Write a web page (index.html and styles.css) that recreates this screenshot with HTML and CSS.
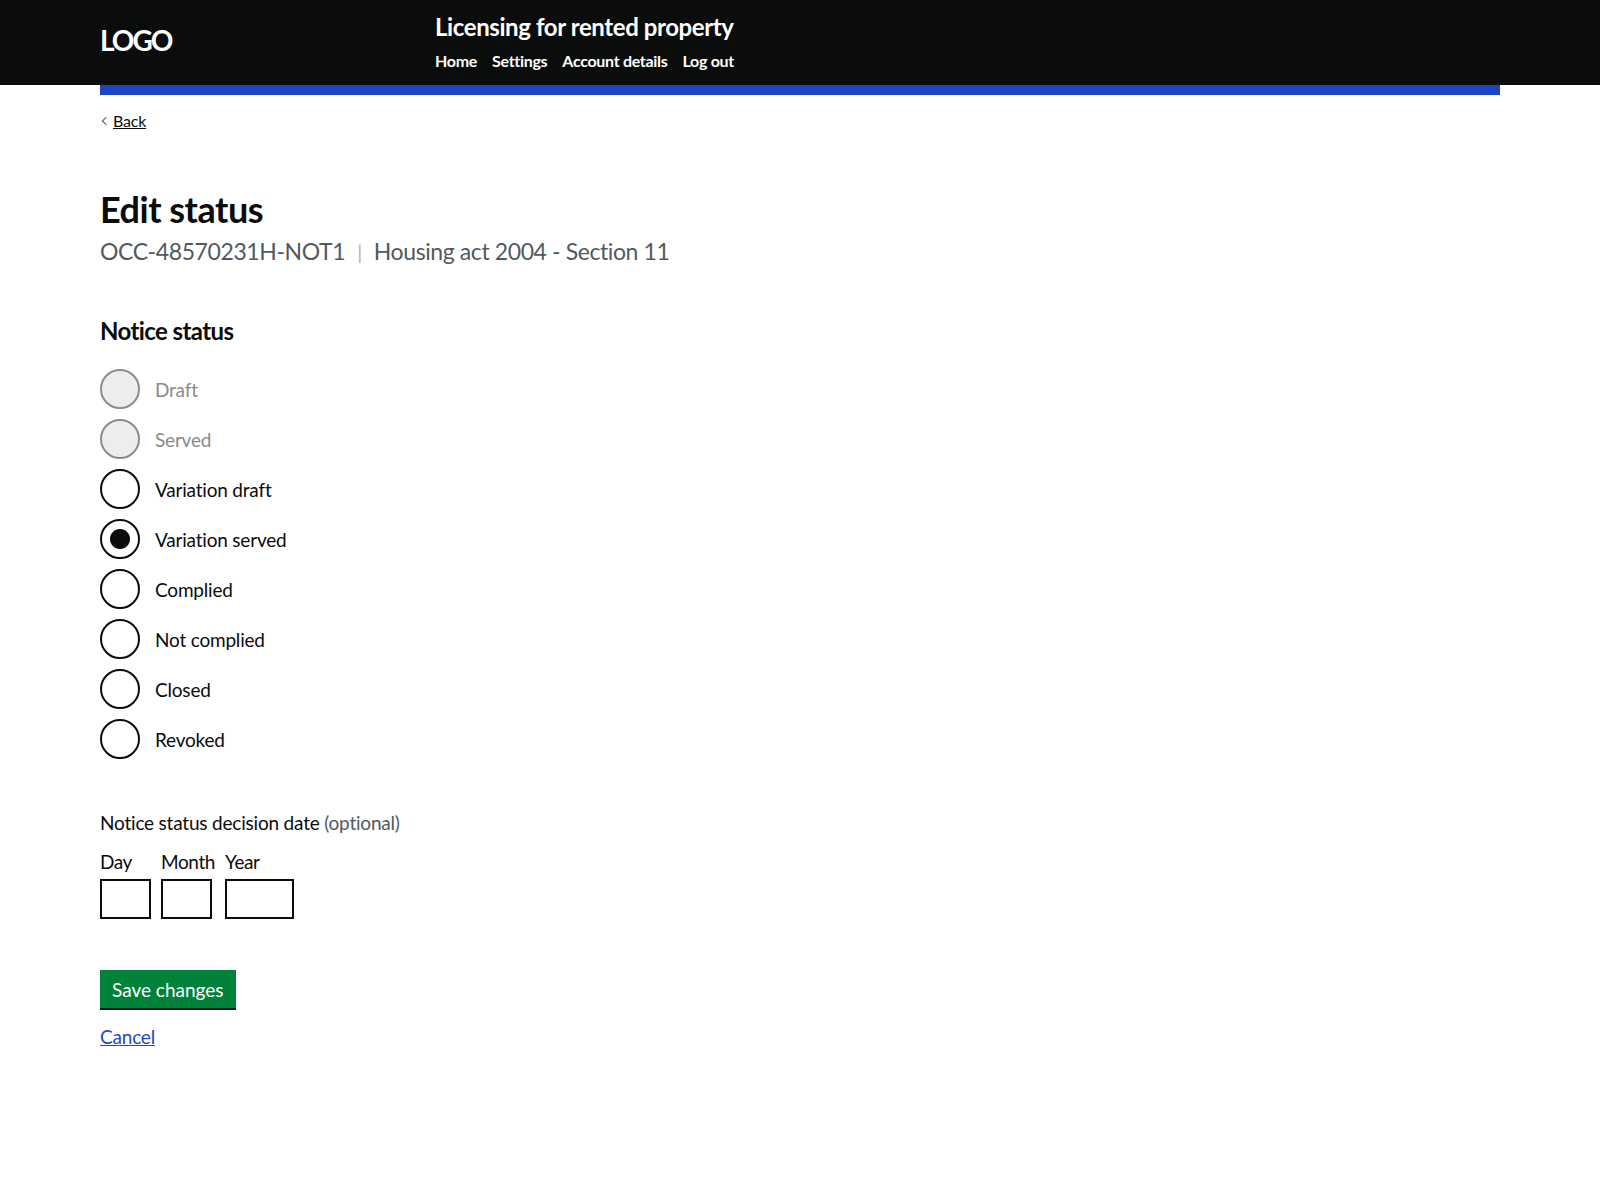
FILE: index.html
```html
<!DOCTYPE html>
<html lang="en">
<head>
    <meta charset="utf-8">
    <title>Edit status - Licensing for rented property</title>
    <link rel="stylesheet" href="styles.css">
</head>
<body>
    <header class="siteHeader">
        <div class="headerInner">
            <div class="logo">LOGO</div>
            <div class="service">
                <div class="serviceName">Licensing for rented property</div>
                <nav class="headerNav">
                    <a href="#">Home</a>
                    <a href="#">Settings</a>
                    <a href="#">Account details</a>
                    <a href="#">Log out</a>
                </nav>
            </div>
        </div>
    </header>
    <div class="pageWidth">
        <div class="headerStripe"></div>
        <a href="#" class="backLink">Back</a>

        <main class="mainContent">
            <h1 class="pageTitle">Edit status</h1>
            <p class="caption">OCC-48570231H-NOT1<span class="divider">|</span>Housing act 2004 - Section 11</p>

            <form>
                <fieldset class="fieldset statusGroup">
                    <legend class="legend">Notice status</legend>
                    <div class="radios">
                        <label class="radioItem isDisabled"><input type="radio" name="status" disabled> <span>Draft</span></label>
                        <label class="radioItem isDisabled"><input type="radio" name="status" disabled> <span>Served</span></label>
                        <label class="radioItem"><input type="radio" name="status"> <span>Variation draft</span></label>
                        <label class="radioItem"><input type="radio" name="status" checked> <span>Variation served</span></label>
                        <label class="radioItem"><input type="radio" name="status"> <span>Complied</span></label>
                        <label class="radioItem"><input type="radio" name="status"> <span>Not complied</span></label>
                        <label class="radioItem"><input type="radio" name="status"> <span>Closed</span></label>
                        <label class="radioItem"><input type="radio" name="status"> <span>Revoked</span></label>
                    </div>
                </fieldset>

                <fieldset class="fieldset dateGroup">
                    <legend class="dateLegend">Notice status decision date <span class="optional">(optional)</span></legend>
                    <div class="dateInputs">
                        <div class="dateItem">
                            <label for="day">Day</label>
                            <input id="day" class="dateBox dateBox2" type="text" inputmode="numeric">
                        </div>
                        <div class="dateItem">
                            <label for="month">Month</label>
                            <input id="month" class="dateBox dateBox2" type="text" inputmode="numeric">
                        </div>
                        <div class="dateItem">
                            <label for="year">Year</label>
                            <input id="year" class="dateBox dateBox4" type="text" inputmode="numeric">
                        </div>
                    </div>
                </fieldset>

                <button type="submit" class="saveButton">Save changes</button>
                <div><a href="#" class="cancelLink">Cancel</a></div>
            </form>
        </main>
    </div>
</body>
</html>
```
FILE: styles.css
```css
body
{
    margin: 0;
    font-family: Lato, "Noto Sans", sans-serif;
    letter-spacing: -0.2px;
    color: #0b0c0c;
    background: #fff;
}

.siteHeader
{
    background: #0b0c0c;
    color: #fff;
}
.headerInner
{
    display: flex;
    height: 85px;
    padding: 0 100px;
}
.logo
{
    width: 335px;
    font-size: 28px;
    font-weight: bold;
    letter-spacing: -2px;
    line-height: 80px;
}
.service
{
    padding-top: 11px;
}
.serviceName
{
    font-size: 24px;
    font-weight: bold;
    letter-spacing: -0.4px;
    line-height: 32px;
}
.headerNav
{
    display: flex;
    gap: 15px;
    margin-top: 6px;
}
.headerNav a
{
    color: #fff;
    text-decoration: none;
    font-size: 16px;
    font-weight: bold;
    letter-spacing: -0.3px;
    line-height: 24px;
}

.pageWidth
{
    padding: 0 100px;
}
.headerStripe
{
    height: 10px;
    background: #1d43c7;
}

.backLink
{
    display: inline-block;
    position: relative;
    margin-top: 15px;
    padding-left: 13px;
    font-size: 16px;
    line-height: 22px;
    color: #0b0c0c;
}
.backLink::before
{
    content: "";
    position: absolute;
    left: 3px;
    top: 8px;
    width: 5px;
    height: 5px;
    border-left: 1px solid #505a5f;
    border-bottom: 1px solid #505a5f;
    transform: rotate(45deg);
}

.mainContent
{
    padding-top: 55px;
}
.pageTitle
{
    margin: 0;
    font-size: 36px;
    letter-spacing: -0.5px;
    line-height: 44px;
}
.caption
{
    margin: 4px 0 0;
    font-size: 23px;
    letter-spacing: -0.4px;
    line-height: 32px;
    color: #505a5f;
}
.divider
{
    color: #b1b4b6;
    margin: 0 12px;
    font-size: 20px;
}

.fieldset
{
    border: 0;
    margin: 0;
    padding: 0;
}
.statusGroup
{
    margin-top: 48px;
}
.legend
{
    padding: 0;
    font-size: 24px;
    font-weight: bold;
    letter-spacing: -0.6px;
    line-height: 30px;
}
.radios
{
    display: flex;
    flex-direction: column;
    gap: 10px;
    margin-top: 23px;
}
.radioItem
{
    display: flex;
    align-items: center;
    gap: 15px;
    font-size: 19px;
}
.radioItem input
{
    appearance: none;
    -webkit-appearance: none;
    margin: 0;
    width: 40px;
    height: 40px;
    border: 2px solid #0b0c0c;
    border-radius: 50%;
    background: #fff;
}
.radioItem input:checked
{
    background: radial-gradient(circle, #0b0c0c 0, #0b0c0c 9.5px, #fff 10.5px);
}
.isDisabled
{
    color: #8a8a8a;
}
.isDisabled input
{
    border-color: #8c8c8c;
    background: #ededed;
}

.dateGroup
{
    margin-top: 51px;
}
.dateLegend
{
    padding: 0;
    font-size: 19px;
    line-height: 25px;
}
.optional
{
    color: #505a5f;
}
.dateInputs
{
    display: flex;
    gap: 10px;
    margin-top: 14px;
}
.dateItem
{
    display: flex;
    flex-direction: column;
}
.dateItem label
{
    margin-bottom: 5px;
    font-size: 19px;
    letter-spacing: -0.4px;
    line-height: 25px;
}
.dateBox
{
    box-sizing: border-box;
    height: 40px;
    border: 2px solid #0b0c0c;
    border-radius: 0;
    font: inherit;
    padding: 5px;
}
.dateBox2
{
    width: 51px;
}
.dateBox4
{
    width: 69px;
}

.saveButton
{
    display: block;
    margin-top: 51px;
    padding: 7px 12px 6px;
    border: 0;
    border-radius: 0;
    background: #00823b;
    box-shadow: 0 2px 0 #002d18;
    color: #fff;
    font: inherit;
    font-size: 19px;
    line-height: 25px;
    cursor: pointer;
}
.cancelLink
{
    display: inline-block;
    margin-top: 16px;
    font-size: 19px;
    line-height: 25px;
    color: #2148cc;
}
```
